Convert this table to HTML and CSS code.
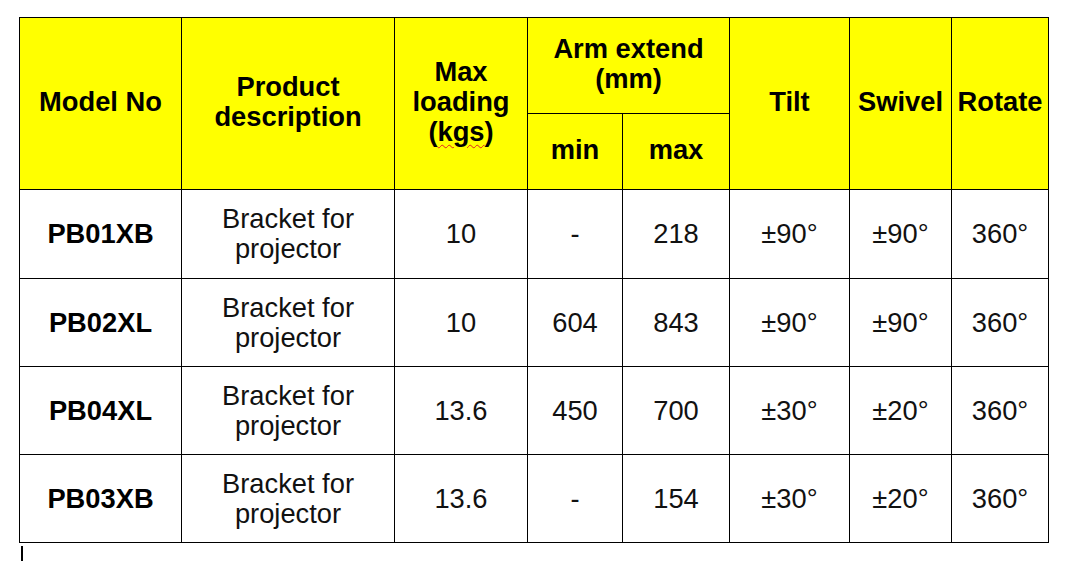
FILE: index.html
```html
<!DOCTYPE html>
<html>
<head>
<meta charset="utf-8">
<link rel="stylesheet" href="styles.css">
</head>
<body>
<div class="page">
  <table class="spec">
    <colgroup>
      <col class="c1"><col class="c2"><col class="c3"><col class="c4"><col class="c5"><col class="c6"><col class="c7"><col class="c8">
    </colgroup>
    <thead>
      <tr class="h1">
        <th rowspan="2">Model No</th>
        <th rowspan="2">Product<br>description</th>
        <th rowspan="2">Max<br>loading<br>(<span class="spell">kgs</span>)</th>
        <th colspan="2">Arm extend<br>(mm)</th>
        <th rowspan="2">Tilt</th>
        <th rowspan="2">Swivel</th>
        <th rowspan="2">Rotate</th>
      </tr>
      <tr class="h2">
        <th>min</th>
        <th>max</th>
      </tr>
    </thead>
    <tbody>
      <tr class="r1">
        <td class="model">PB01XB</td>
        <td>Bracket for<br>projector</td>
        <td>10</td>
        <td>-</td>
        <td>218</td>
        <td>±90°</td>
        <td>±90°</td>
        <td>360°</td>
      </tr>
      <tr>
        <td class="model">PB02XL</td>
        <td>Bracket for<br>projector</td>
        <td>10</td>
        <td>604</td>
        <td>843</td>
        <td>±90°</td>
        <td>±90°</td>
        <td>360°</td>
      </tr>
      <tr>
        <td class="model">PB04XL</td>
        <td>Bracket for<br>projector</td>
        <td>13.6</td>
        <td>450</td>
        <td>700</td>
        <td>±30°</td>
        <td>±20°</td>
        <td>360°</td>
      </tr>
      <tr>
        <td class="model">PB03XB</td>
        <td>Bracket for<br>projector</td>
        <td>13.6</td>
        <td>-</td>
        <td>154</td>
        <td>±30°</td>
        <td>±20°</td>
        <td>360°</td>
      </tr>
    </tbody>
  </table>
  <div class="caret"></div>
</div>
</body>
</html>
```

FILE: styles.css
```css
html, body {
  margin: 0;
  padding: 0;
  background: #ffffff;
}

.page {
  padding: 17px 0 0 19px;
  font-family: "Liberation Sans", Arial, sans-serif;
}

.spec {
  border-collapse: collapse;
  table-layout: fixed;
  width: 1030px;
  font-size: 27.3px;
  line-height: 30px;
}

.c1 { width: 162px; }
.c2 { width: 213px; }
.c3 { width: 133px; }
.c4 { width: 95px; }
.c5 { width: 107px; }
.c6 { width: 120px; }
.c7 { width: 102px; }
.c8 { width: 97px; }

.spec th,
.spec td {
  border: 1px solid #000;
  padding: 0;
  text-align: center;
  vertical-align: middle;
}

.spec th {
  background: #ffff00;
  color: #000;
  font-weight: bold;
  padding-bottom: 3px;
}

.spec td {
  color: #111;
  font-weight: normal;
}

.spec td.model {
  font-weight: bold;
  color: #000;
}

.h1 { height: 96px; }
.h2 { height: 76px; }
.spec tbody tr { height: 88px; }
.spec tbody tr.r1 { height: 89px; }

.spell {
  text-decoration: underline wavy #e02020;
  text-decoration-thickness: 1px;
  text-underline-offset: 3px;
}

.caret {
  width: 2px;
  height: 15px;
  margin: 3px 0 0 2px;
  background: #000;
}
```
